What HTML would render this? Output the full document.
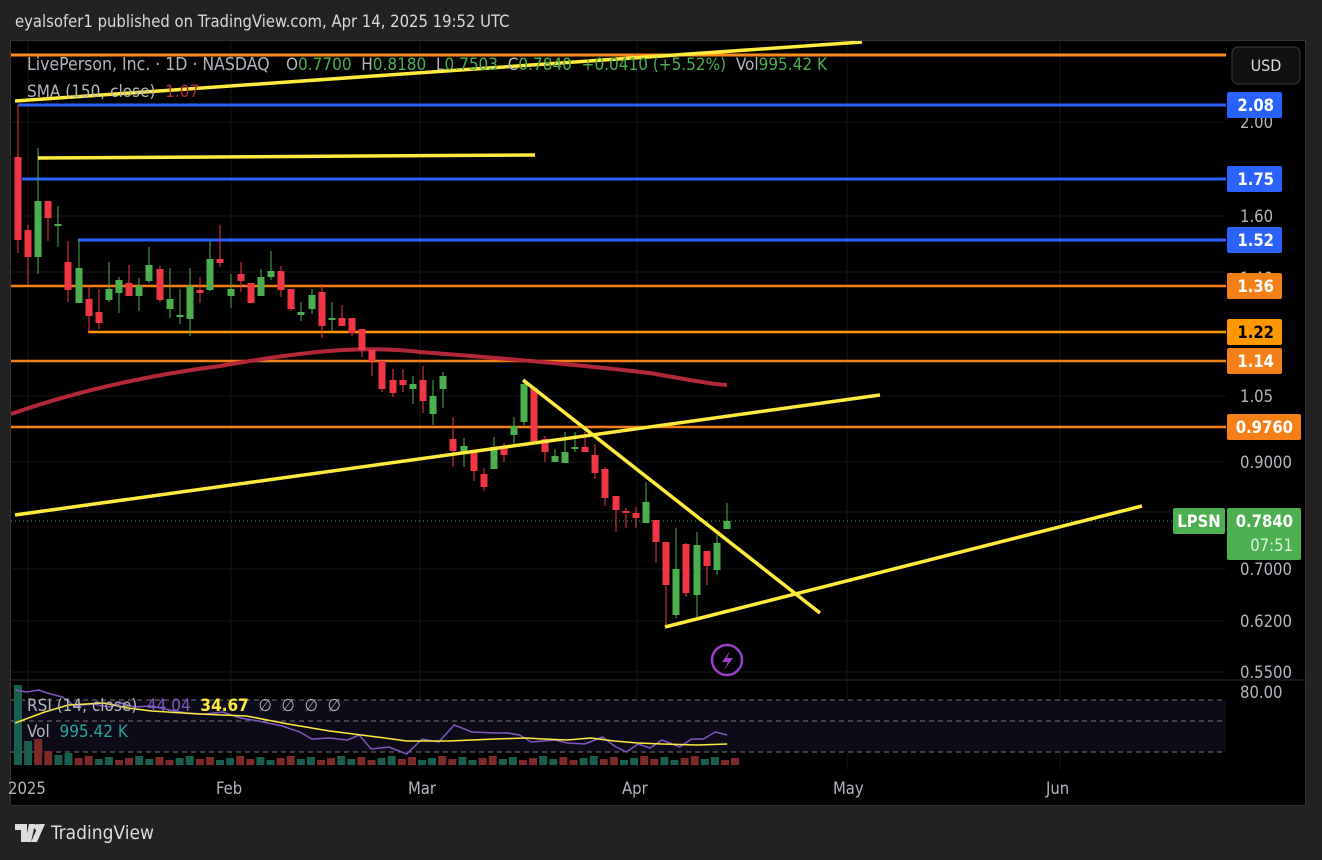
<!DOCTYPE html>
<html><head><meta charset="utf-8"><style>
html,body{margin:0;padding:0;background:#222222;width:1322px;height:860px;overflow:hidden;font-family:"Liberation Sans",sans-serif}
.title{position:absolute;left:15px;top:12px;color:#d9d9d9;font-size:16.5px;font-family:"DejaVu Sans Condensed","Liberation Sans",sans-serif}
.chart{position:absolute;left:10px;top:40px;width:1296px;height:766px;background:#000;border:1px solid #333;box-sizing:border-box;overflow:hidden}
svg text{font-family:"DejaVu Sans Condensed","Liberation Sans",sans-serif}
.footer{position:absolute;left:15px;top:822px;color:#ddd;font-size:19px;font-family:"DejaVu Sans Condensed","Liberation Sans",sans-serif;display:flex;align-items:center;gap:6px}
</style></head><body>
<div class="title">eyalsofer1 published on TradingView.com, Apr 14, 2025 19:52 UTC</div>
<div class="chart"></div>
<svg id="s" width="1322" height="860" style="position:absolute;left:0;top:0"></svg>
<div class="footer"><svg width="30" height="18" viewBox="0 0 30 18"><path d="M0 0h12v18h-6v-12h-6z M14 0h6l-4 18h-6z" fill="#ddd"/><circle cx="22" cy="3" r="3" fill="#ddd"/><path d="M24 0h6l-8 18h-6z" fill="#ddd"/></svg><span>TradingView</span></div>
<script>
var s=document.getElementById('s');var h='';
function L(x1,y1,x2,y2,c,w,extra){h+='<line x1="'+x1+'" y1="'+y1+'" x2="'+x2+'" y2="'+y2+'" stroke="'+c+'" stroke-width="'+w+'" '+(extra||'')+'/>';}
function R(x,y,w,hh,c){h+='<rect x="'+x+'" y="'+y+'" width="'+w+'" height="'+hh+'" fill="'+c+'"/>';}
function T(x,y,t,c,sz,extra){h+='<text x="'+x+'" y="'+y+'" fill="'+c+'" font-size="'+sz+'" '+(extra||'')+'>'+t+'</text>';}
h+='<clipPath id="c"><rect x="11" y="41" width="1294" height="764"/></clipPath><g clip-path="url(#c)">';
[28,231,420,637,847,1060].forEach(function(x){L(x,41,x,770,'#161616',1);});
[122,216,272,396,462,512,569,621,672].forEach(function(y){L(11,y,1226,y,'#161616',1);});
L(11,680,1305,680,'#2a2e39',1);
R(11,700,1215,52,'#0e0b18');
[700,721,752].forEach(function(y){L(11,y,1226,y,'#777',1,'stroke-dasharray="5,4"');});
for(var i=0;i<72;i++){var x=14+i*10.1;var hv=i<3?[60,24,26][i]:(i<6?[14,10,12][i-3]:5+((i*7)%5));if(i==0)hv=80;var g=(i*3+1)%4<2;R(x,765-hv,8,hv,g?'#1a5e4e':'#7e2a2a');}
var rsi=[[15,690],[25,692],[35,690],[45,694],[55,697],[65,706],[80,704],[95,707],[105,703],[115,707],[130,706],[145,710],[160,713],[175,714],[190,712],[205,718],[220,721],[240,726],[255,732],[265,739],[280,738],[295,740],[305,735],[315,749],[330,747],[345,754],[358,739],[372,742],[385,725],[400,732],[420,733],[430,733],[440,735],[450,742],[460,741],[470,740],[480,743],[495,744],[510,737],[520,746],[530,752],[540,744],[550,748],[560,740],[575,747],[585,739],[595,739],[605,732],[615,735]];
var rsi2=[[15,723],[40,712],[60,705],[90,703],[110,708],[130,711],[170,714],[210,716],[245,724],[280,731],[300,734],[320,737],[345,741],[380,741],[400,740],[420,739],[445,738],[460,739],[480,740],[500,738],[520,741],[540,743],[560,744],[590,745],[615,744]];
function P(a,ox,c,w){h+='<polyline fill="none" stroke="'+c+'" stroke-width="'+w+'" points="'+a.map(function(p){return (p[0]*(ox)+15)+','+p[1];}).join(' ')+'"/>';}
function S(a){return a.map(function(p){return [ (p[0]-15)*1.187 ,p[1]];});}
P(S(rsi),1,'#7e57c2',1.5);P(S(rsi2),1,'#ffeb3b',1.5);
L(11,55,1226,55,'#ff8c1a',3);
L(18,105,1226,105,'#2962ff',3);
L(22,179,1226,179,'#2962ff',3);
L(78,240,1226,240,'#2962ff',3);
L(11,286,1226,286,'#f57f17',2.5);
L(88,332,1226,332,'#ff9800',2.5);
L(11,361,1226,361,'#f57f17',2.5);
L(11,427,1226,427,'#f57f17',2.5);
L(11,521,1226,521,'#4caf50',1,'stroke-dasharray="1,3"');
h+='<path d="M11 414 C80 390 150 375 220 366 C300 352 360 345 420 352 C500 358 580 365 650 373 C690 380 710 384 727 385" fill="none" stroke="#b22838" stroke-width="4"/>';
var C=[[18,105,157,240,253,0],[28,225,230,257,285,0],[38,148,201,257,274,1],[48,201,201,218,241,0],[58,206,224,226,247,1],[68,241,262,290,302,0],[79,239,268,303,302,1],[89,286,299,316,333,0],[99,289,312,323,329,0],[109,262,289,300,302,1],[119,277,280,293,313,1],[129,265,283,296,296,0],[139,278,286,296,311,1],[149,247,265,281,283,1],[160,266,269,300,302,0],[170,268,299,309,318,1],[180,289,315,316,324,1],[190,268,286,319,336,1],[200,277,290,293,303,0],[210,241,259,290,291,1],[220,225,259,263,267,0],[231,274,289,296,308,1],[241,262,274,281,292,0],[251,283,283,303,303,0],[261,269,277,296,296,1],[271,251,271,277,280,1],[281,266,271,290,297,0],[291,289,289,309,311,0],[301,302,312,315,321,1],[312,289,295,309,314,1],[322,284,292,326,338,0],[332,302,318,319,331,1],[342,305,318,326,326,0],[352,318,318,333,336,0],[362,329,329,350,357,0],[372,350,350,361,376,0],[382,361,361,389,392,0],[393,369,380,393,397,0],[403,369,380,385,392,0],[413,376,384,389,404,1],[423,366,380,401,413,0],[433,380,396,414,425,1],[443,372,376,389,408,1],[453,417,439,451,467,0],[464,438,446,453,467,1],[474,451,452,471,481,0],[484,468,474,487,491,0],[494,437,447,469,469,1],[504,443,448,455,462,0],[514,417,426,435,447,1],[524,379,384,422,425,1],[534,388,388,443,443,0],[545,436,439,452,462,0],[555,449,456,462,462,1],[565,432,452,463,463,1],[575,432,447,449,452,1],[585,432,447,452,452,0],[595,444,455,473,479,0],[605,467,469,498,506,0],[616,496,496,510,532,0],[626,508,511,513,528,0],[636,507,513,518,528,0],[646,482,502,523,523,1],[656,520,520,542,563,0],[666,542,542,585,627,0],[676,528,569,615,618,1],[686,543,544,593,597,0],[697,532,545,595,618,1],[707,551,551,566,585,0],[717,535,543,570,575,1],[727,503,521,529,529,1]];
C.forEach(function(c){var col=c[5]?'#4caf50':'#f23645';L(c[0],c[1],c[0],c[4],col,1);var bh=Math.max(2,c[3]-c[2]);R(c[0]-3.5,c[2],7,bh,col);});
[[15,101,862,42],[38,158,535,155],[15,515,880,395],[523,380,820,613],[665,627,1142,506]].forEach(function(a){L(a[0],a[1],a[2],a[3],'#ffeb3b',3.5);});
T(27,70,'LivePerson, Inc. · 1D · NASDAQ','#b2b5be',17.5);
T(286,70,'O<tspan fill="#4caf50">0.7700</tspan>  H<tspan fill="#4caf50">0.8180</tspan>  L<tspan fill="#4caf50">0.7503</tspan>  C<tspan fill="#4caf50">0.7840</tspan>  <tspan fill="#4caf50">+0.0410 (+5.52%)</tspan>  Vol<tspan fill="#4caf50">995.42 K</tspan>','#b2b5be',17,'xml:space="preserve"');
T(27,97,'SMA (150, close)  <tspan fill="#b22838">1.07</tspan>','#b2b5be',17,'xml:space="preserve"');
T(27,711,'RSI (14, close)  <tspan fill="#7e57c2">44.04</tspan>  <tspan fill="#ffeb3b" font-weight="bold">34.67</tspan>  ∅  ∅  ∅  ∅','#b2b5be',17,'xml:space="preserve"');
T(27,737,'Vol  <tspan fill="#26a69a">995.42 K</tspan>','#b2b5be',17,'xml:space="preserve"');
h+='<circle cx="727" cy="660" r="15" fill="none" stroke="#9c3fc9" stroke-width="2.5"/><path d="M730 651 L722 662 L728 662 L724 670 L733 658 L727 658 Z" fill="#9c3fc9"/>';
h+='</g>';
[['2025',8],['Feb',216],['Mar',408],['Apr',622],['May',833],['Jun',1046]].forEach(function(a){T(a[1],794,a[0],'#b2b5be',16.5);});
[[122,'2.00'],[216,'1.60'],[278,'1.40'],[396,'1.05'],[462,'0.9000'],[516,'0.8000'],[569,'0.7000'],[621,'0.6200'],[672,'0.5500'],[692,'80.00']].forEach(function(a){T(1240,a[0]+6,a[1],'#b2b5be',16.5);});
function B(y,w,bg,fg,t){h+='<rect x="1227" y="'+y+'" width="'+w+'" height="26" rx="2" fill="'+bg+'"/>';T(1227+w-8,y+19,t,fg,16.5,'text-anchor="end" font-weight="bold"');}
B(92,55,'#2962ff','#fff','2.08');B(166,55,'#2962ff','#fff','1.75');B(227,55,'#2962ff','#fff','1.52');
B(273,55,'#f57f17','#fff','1.36');B(319,55,'#ff9800','#000','1.22');B(348,55,'#f57f17','#fff','1.14');B(414,74,'#f57f17','#fff','0.9760');
h+='<rect x="1173" y="508" width="52" height="26" rx="2" fill="#4caf50"/>';T(1199,527,'LPSN','#fff',16.5,'text-anchor="middle" font-weight="bold"');
h+='<rect x="1227" y="508" width="74" height="52" rx="2" fill="#4caf50"/>';T(1293,527,'0.7840','#fff',16.5,'text-anchor="end" font-weight="bold"');T(1293,551,'07:51','#dfeedd',16.5,'text-anchor="end"');
h+='<rect x="1232" y="47" width="68" height="37" rx="6" fill="#111" stroke="#3a3a3a"/>';T(1266,71,'USD','#ddd',16,'text-anchor="middle"');
s.innerHTML=h;
</script>
</body></html>
